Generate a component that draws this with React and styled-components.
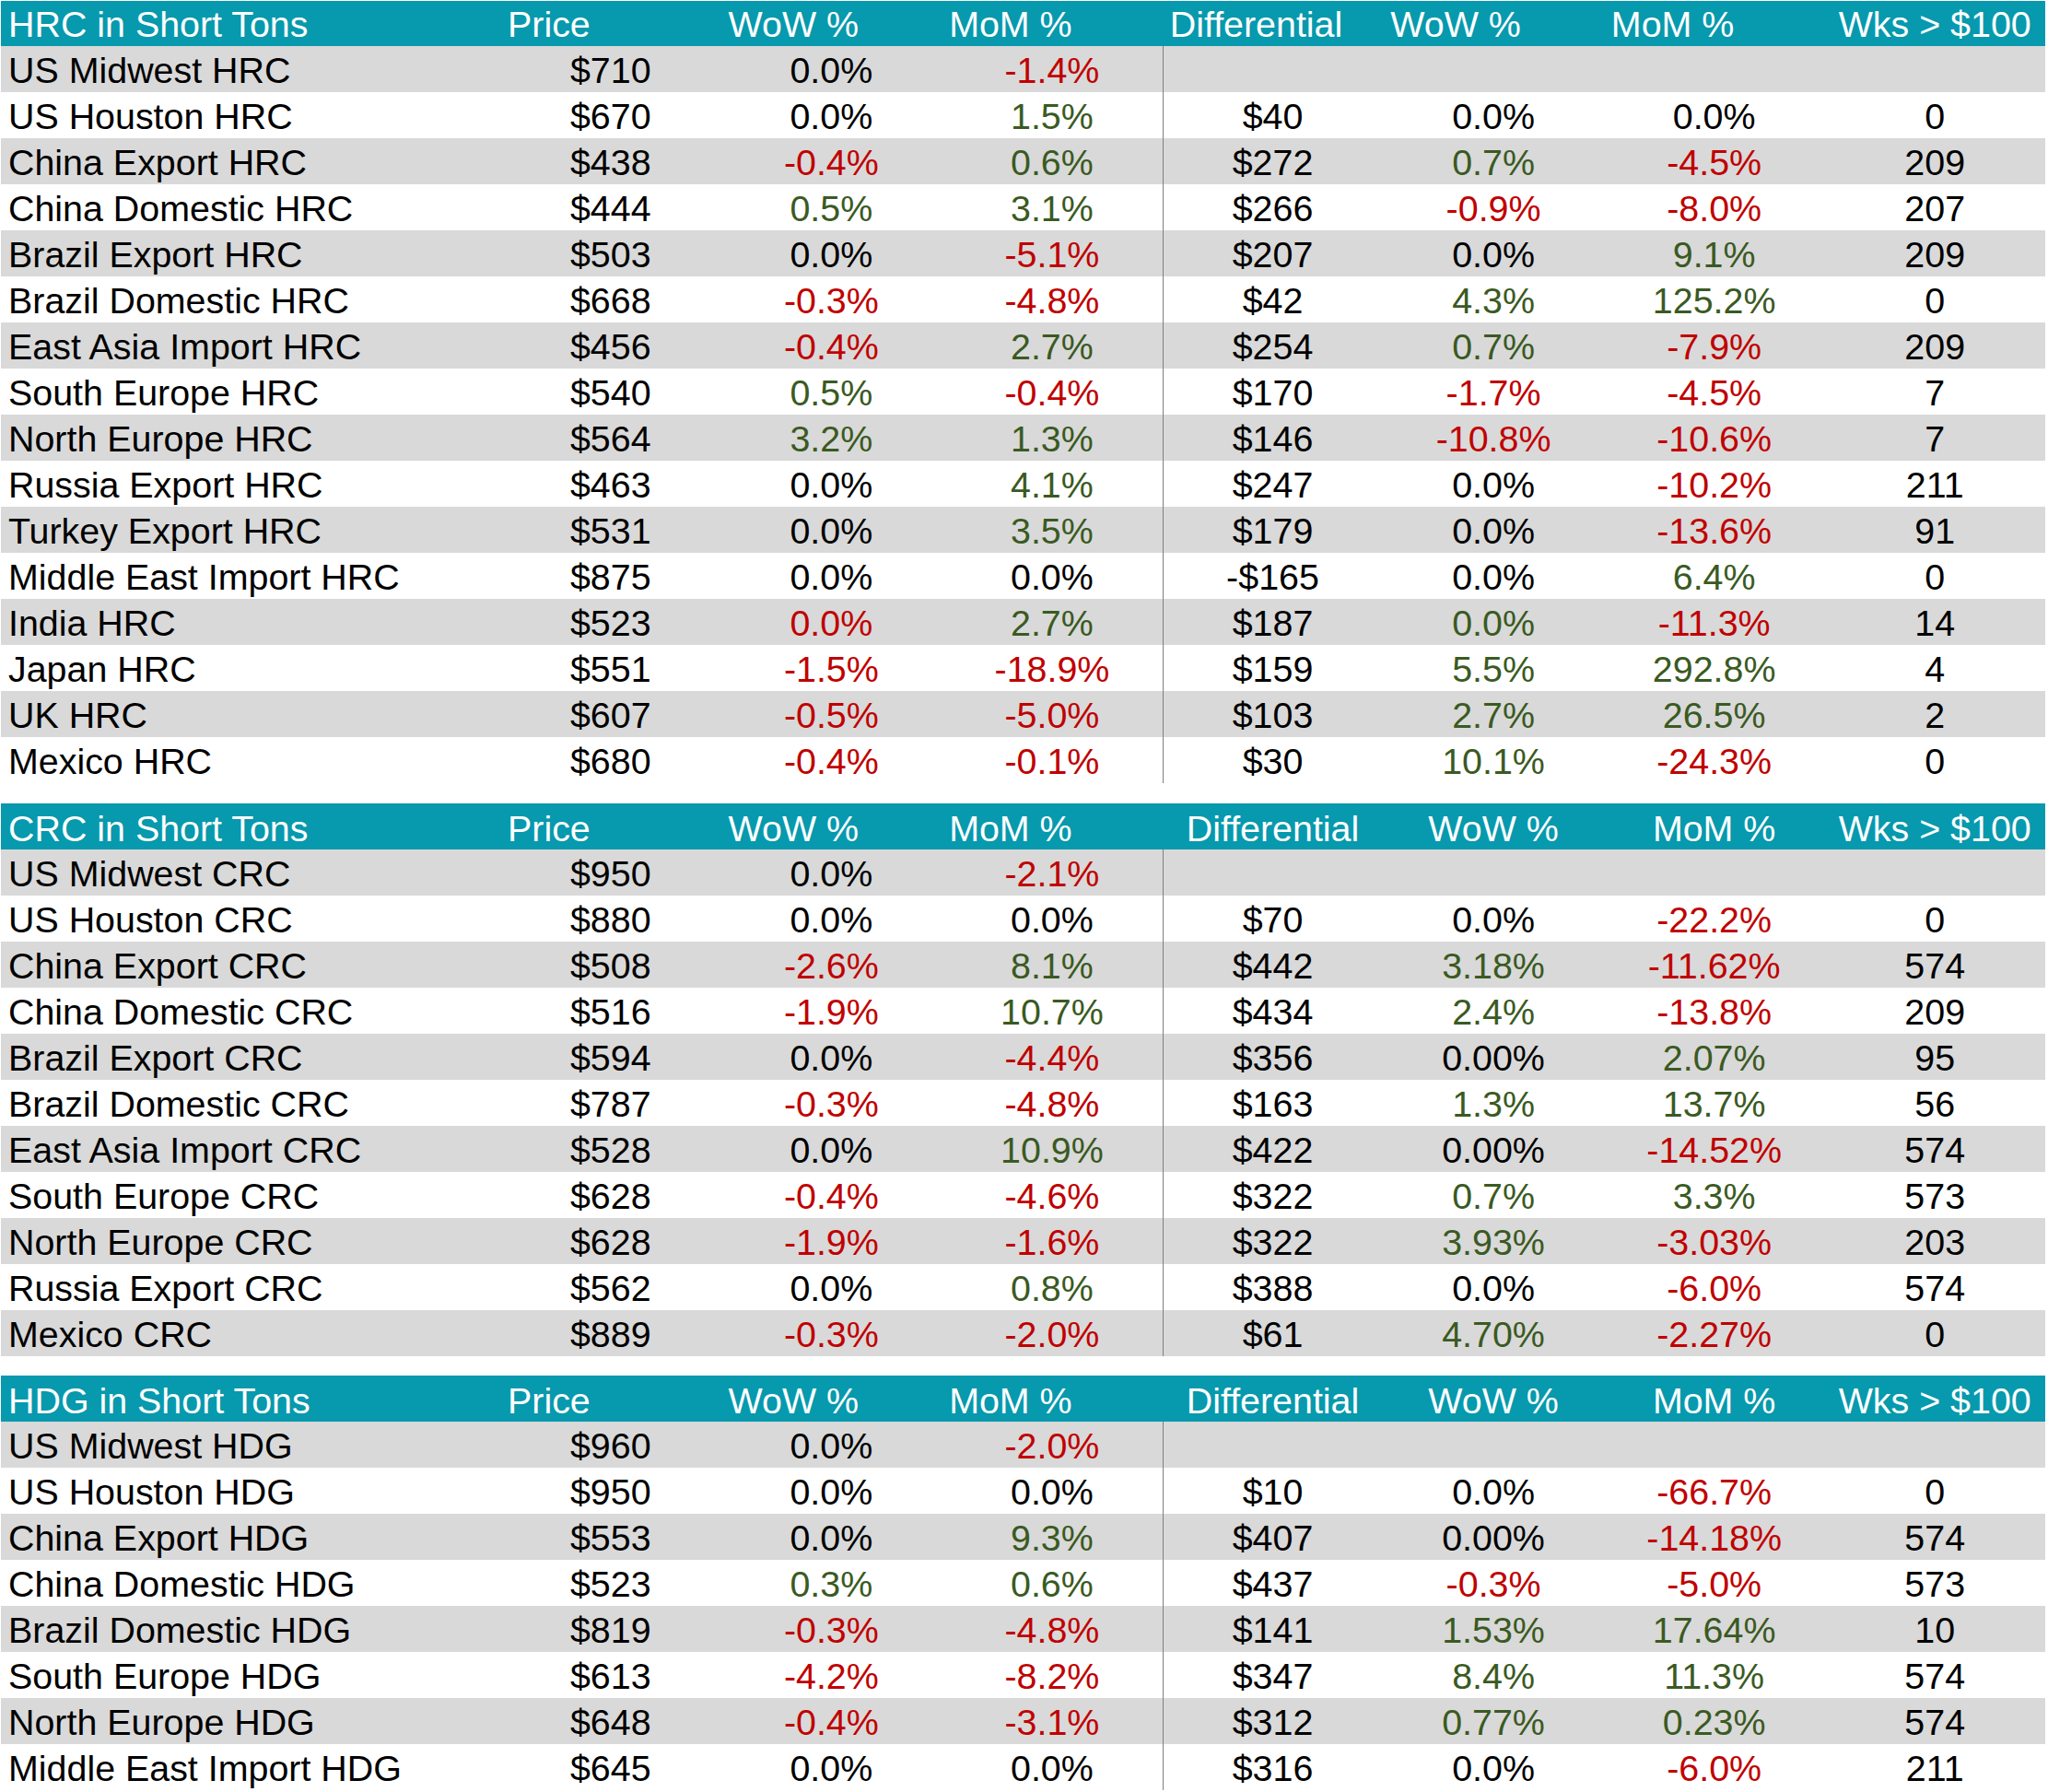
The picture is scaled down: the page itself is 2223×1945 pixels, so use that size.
import React from 'react';
import styled, { createGlobalStyle } from 'styled-components';

const GlobalStyle = createGlobalStyle`
  html, body {
    margin: 0;
    padding: 0;
    background: #ffffff;
  }
  body {
    font-family: "Liberation Sans", Arial, sans-serif;
  }
`;

const TONES = { k: '#000000', r: '#c00000', g: '#3a5a22' };

const COLUMNS = ['Price', 'WoW %', 'MoM %', 'Differential', 'WoW %', 'MoM %', 'Wks > $100'];

// "r:" = red, "g:" = green, no prefix = black
const sections = [
  {
    title: 'HRC in Short Tons',
    headAlign: ['left', 'left', 'left', 'left', 'left', 'left', 'center'],
    space: 1,
    headHeight: 49,
    headPad: 2,
    rows: [
      ['US Midwest HRC', '$710', '0.0%', 'r:-1.4%', '', '', '', ''],
      ['US Houston HRC', '$670', '0.0%', 'g:1.5%', '$40', '0.0%', '0.0%', '0'],
      ['China Export HRC', '$438', 'r:-0.4%', 'g:0.6%', '$272', 'g:0.7%', 'r:-4.5%', '209'],
      ['China Domestic HRC', '$444', 'g:0.5%', 'g:3.1%', '$266', 'r:-0.9%', 'r:-8.0%', '207'],
      ['Brazil Export HRC', '$503', '0.0%', 'r:-5.1%', '$207', '0.0%', 'g:9.1%', '209'],
      ['Brazil Domestic HRC', '$668', 'r:-0.3%', 'r:-4.8%', '$42', 'g:4.3%', 'g:125.2%', '0'],
      ['East Asia Import HRC', '$456', 'r:-0.4%', 'g:2.7%', '$254', 'g:0.7%', 'r:-7.9%', '209'],
      ['South Europe HRC', '$540', 'g:0.5%', 'r:-0.4%', '$170', 'r:-1.7%', 'r:-4.5%', '7'],
      ['North Europe HRC', '$564', 'g:3.2%', 'g:1.3%', '$146', 'r:-10.8%', 'r:-10.6%', '7'],
      ['Russia Export HRC', '$463', '0.0%', 'g:4.1%', '$247', '0.0%', 'r:-10.2%', '211'],
      ['Turkey Export HRC', '$531', '0.0%', 'g:3.5%', '$179', '0.0%', 'r:-13.6%', '91'],
      ['Middle East Import HRC', '$875', '0.0%', '0.0%', '-$165', '0.0%', 'g:6.4%', '0'],
      ['India HRC', '$523', 'r:0.0%', 'g:2.7%', '$187', 'g:0.0%', 'r:-11.3%', '14'],
      ['Japan HRC', '$551', 'r:-1.5%', 'r:-18.9%', '$159', 'g:5.5%', 'g:292.8%', '4'],
      ['UK HRC', '$607', 'r:-0.5%', 'r:-5.0%', '$103', 'g:2.7%', 'g:26.5%', '2'],
      ['Mexico HRC', '$680', 'r:-0.4%', 'r:-0.1%', '$30', 'g:10.1%', 'r:-24.3%', '0'],
    ],
  },
  {
    title: 'CRC in Short Tons',
    headAlign: ['left', 'left', 'left', 'center', 'center', 'center', 'center'],
    space: 22,
    headHeight: 50,
    headPad: 4,
    rows: [
      ['US Midwest CRC', '$950', '0.0%', 'r:-2.1%', '', '', '', ''],
      ['US Houston CRC', '$880', '0.0%', '0.0%', '$70', '0.0%', 'r:-22.2%', '0'],
      ['China Export CRC', '$508', 'r:-2.6%', 'g:8.1%', '$442', 'g:3.18%', 'r:-11.62%', '574'],
      ['China Domestic CRC', '$516', 'r:-1.9%', 'g:10.7%', '$434', 'g:2.4%', 'r:-13.8%', '209'],
      ['Brazil Export CRC', '$594', '0.0%', 'r:-4.4%', '$356', '0.00%', 'g:2.07%', '95'],
      ['Brazil Domestic CRC', '$787', 'r:-0.3%', 'r:-4.8%', '$163', 'g:1.3%', 'g:13.7%', '56'],
      ['East Asia Import CRC', '$528', '0.0%', 'g:10.9%', '$422', '0.00%', 'r:-14.52%', '574'],
      ['South Europe CRC', '$628', 'r:-0.4%', 'r:-4.6%', '$322', 'g:0.7%', 'g:3.3%', '573'],
      ['North Europe CRC', '$628', 'r:-1.9%', 'r:-1.6%', '$322', 'g:3.93%', 'r:-3.03%', '203'],
      ['Russia Export CRC', '$562', '0.0%', 'g:0.8%', '$388', '0.0%', 'r:-6.0%', '574'],
      ['Mexico CRC', '$889', 'r:-0.3%', 'r:-2.0%', '$61', 'g:4.70%', 'r:-2.27%', '0'],
    ],
  },
  {
    title: 'HDG in Short Tons',
    headAlign: ['left', 'left', 'left', 'center', 'center', 'center', 'center'],
    space: 21,
    headHeight: 50,
    headPad: 4,
    rows: [
      ['US Midwest HDG', '$960', '0.0%', 'r:-2.0%', '', '', '', ''],
      ['US Houston HDG', '$950', '0.0%', '0.0%', '$10', '0.0%', 'r:-66.7%', '0'],
      ['China Export HDG', '$553', '0.0%', 'g:9.3%', '$407', '0.00%', 'r:-14.18%', '574'],
      ['China Domestic HDG', '$523', 'g:0.3%', 'g:0.6%', '$437', 'r:-0.3%', 'r:-5.0%', '573'],
      ['Brazil Domestic HDG', '$819', 'r:-0.3%', 'r:-4.8%', '$141', 'g:1.53%', 'g:17.64%', '10'],
      ['South Europe HDG', '$613', 'r:-4.2%', 'r:-8.2%', '$347', 'g:8.4%', 'g:11.3%', '574'],
      ['North Europe HDG', '$648', 'r:-0.4%', 'r:-3.1%', '$312', 'g:0.77%', 'g:0.23%', '574'],
      ['Middle East Import HDG', '$645', '0.0%', '0.0%', '$316', '0.0%', 'r:-6.0%', '211'],
    ],
  },
];

const parse = (value) => {
  const m = /^([rg]):(.*)$/.exec(value);
  return m ? { tone: m[1], text: m[2] } : { tone: 'k', text: value };
};

const App = () => (
  <>
    <GlobalStyle />
    <Page>
      {sections.map((section) => (
        <Section key={section.title} $space={section.space}>
          <HeadRow $height={section.headHeight}>
            <HeadCell $align="left" $pad={section.headPad}>
              {section.title}
            </HeadCell>
            {COLUMNS.map((col, i) => (
              <HeadCell key={i} $align={section.headAlign[i]} $pad={section.headPad}>
                {col}
              </HeadCell>
            ))}
          </HeadRow>
          {section.rows.map((row, r) => (
            <Row key={row[0]} $shade={r % 2 === 0}>
              <Cell $align="left">{row[0]}</Cell>
              {row.slice(1).map((value, i) => {
                const { tone, text } = parse(value);
                return (
                  <Cell key={i} $align="center" $tone={tone} $divider={i === 3}>
                    {text}
                  </Cell>
                );
              })}
            </Row>
          ))}
        </Section>
      ))}
    </Page>
  </>
);

export default App;

const Page = styled.div`
  width: 2219px;
  margin-left: 1px;
  display: flex;
  flex-direction: column;
  font-family: "Liberation Sans", Arial, sans-serif;
  font-size: 39.4px;
`;

const Section = styled.section`
  margin-top: ${(p) => p.$space}px;
  display: flex;
  flex-direction: column;
`;

const Grid = styled.div`
  display: grid;
  grid-template-columns: 542px repeat(7, 1fr);
`;

const HeadRow = styled(Grid)`
  height: ${(p) => p.$height}px;
  background: #0799ad;
  color: #ffffff;
`;

const HeadCell = styled.div`
  padding: ${(p) => p.$pad}px 8px 0;
  line-height: 47px;
  white-space: nowrap;
  text-align: ${(p) => p.$align};
`;

const Row = styled(Grid)`
  height: 50px;
  background: ${(p) => (p.$shade ? '#d9d9d9' : '#ffffff')};
`;

const Cell = styled.div`
  padding: 3px 8px 0;
  line-height: 47px;
  white-space: nowrap;
  text-align: ${(p) => p.$align};
  color: ${(p) => TONES[p.$tone] || '#000000'};
  box-shadow: ${(p) => (p.$divider ? 'inset 1px 0 0 #7f7f7f' : 'none')};
`;
